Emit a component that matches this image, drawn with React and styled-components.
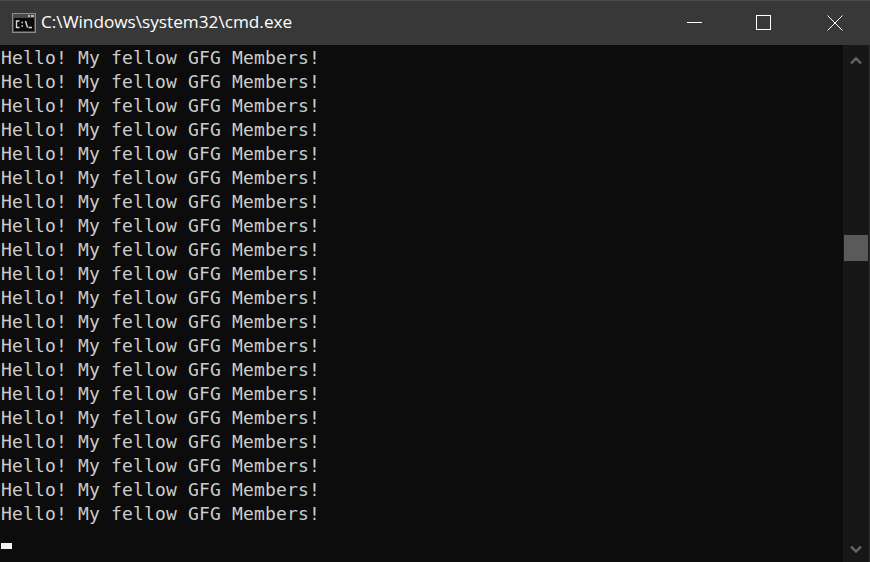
import React from 'react';
import styled, { createGlobalStyle } from 'styled-components';

const LINES = Array.from({ length: 20 }, (_, i) => i);

const App = () => {
  return (
    <Window>
      <GlobalStyle />
      <TitleBar>
        <CmdIcon width="24" height="20" viewBox="0 0 24 20">
          <rect x="0.5" y="0.5" width="23" height="19" fill="#4a4a4a" stroke="#8c8c8c" />
          <rect x="16" y="2" width="2" height="2" fill="#b5b5b5" />
          <rect x="19" y="2" width="3" height="2" fill="#b5b5b5" />
          <rect x="2" y="5" width="20" height="13" fill="#0a0a0a" />
          <path d="M7.5 8H4.5V14.5H7.5M9.5 9.5H11M9.5 13H11M13.5 8L15.5 14.5M16.5 14.5H20" fill="none" stroke="#d8d8d8" strokeWidth="1.4" />
        </CmdIcon>
        <Title>C:\Windows\system32\cmd.exe</Title>
        <WindowButton>
          <svg width="16" height="16" viewBox="0 0 16 16">
            <path d="M0 7.5H15" stroke="#fff" strokeWidth="1" />
          </svg>
        </WindowButton>
        <WindowButton>
          <svg width="18" height="16" viewBox="0 0 18 16">
            <rect x="0.5" y="0.5" width="14" height="14" fill="none" stroke="#fff" strokeWidth="1" />
          </svg>
        </WindowButton>
        <WindowButton>
          <svg width="16" height="16" viewBox="0 0 16 16">
            <path d="M0.5 0.5L15.5 15.5M15.5 0.5L0.5 15.5" stroke="#fff" strokeWidth="1" />
          </svg>
        </WindowButton>
      </TitleBar>

      <Body>
        <Console>
          {LINES.map((i) => (
            <Line key={i}>Hello! My fellow GFG Members!</Line>
          ))}
          <Line>
            <Cursor />
          </Line>
        </Console>

        <ScrollBar>
          <ArrowButton $height={30}>
            <svg width="12" height="9" viewBox="0 0 12 9">
              <path d="M1 7.5L6 2.5L11 7.5" fill="none" stroke="#666" strokeWidth="2.4" />
            </svg>
          </ArrowButton>
          <Track>
            <Thumb />
          </Track>
          <ArrowButton $height={25}>
            <svg width="12" height="9" viewBox="0 0 12 9">
              <path d="M1 1.5L6 6.5L11 1.5" fill="none" stroke="#666" strokeWidth="2.4" />
            </svg>
          </ArrowButton>
        </ScrollBar>
      </Body>
    </Window>
  );
};

export default App;

const GlobalStyle = createGlobalStyle`
  html, body {
    margin: 0;
    padding: 0;
    overflow: hidden;
    background: #0c0c0c;
  }
`;

const Window = styled.div`
  display: flex;
  flex-direction: column;
  width: 870px;
  height: 562px;
  overflow: hidden;
`;

// Title bar
const TitleBar = styled.div`
  display: flex;
  align-items: flex-start;
  flex: none;
  box-sizing: border-box;
  height: 45px;
  padding-left: 12px;
  background: #383838;
  border-top: 1px solid #4a4a4a;
`;

const CmdIcon = styled.svg`
  flex: none;
  margin: 12px 5px 0 0;
`;

const Title = styled.div`
  flex: 1;
  font-family: 'Open Sans', 'Liberation Sans', sans-serif;
  font-size: 17.2px;
  line-height: 42px;
  color: #ffffff;
  white-space: nowrap;
`;

const WindowButton = styled.div`
  display: flex;
  align-items: center;
  justify-content: center;
  width: 70px;
  height: 43px;
`;

// Console
const Body = styled.div`
  display: flex;
  flex: 1;
  min-height: 0;
`;

const Console = styled.div`
  flex: 1;
  padding-top: 1px;
  background: #0c0c0c;
`;

const Line = styled.div`
  height: 24px;
  padding-left: 1px;
  font-family: 'DejaVu Sans Mono', 'Liberation Mono', monospace;
  font-size: 18px;
  letter-spacing: 0.16px;
  line-height: 24px;
  color: #cccccc;
  white-space: pre;
`;

const Cursor = styled.span`
  display: block;
  width: 11px;
  height: 6px;
  margin-top: 17px;
  background: #f2f2f2;
`;

// Scrollbar
const ScrollBar = styled.div`
  display: flex;
  flex-direction: column;
  flex: none;
  box-sizing: border-box;
  width: 27px;
  background: #171717;
  border-right: 1px solid #2c2c2c;
`;

const ArrowButton = styled.div`
  display: flex;
  align-items: center;
  justify-content: center;
  flex: none;
  height: ${(props) => props.$height}px;
`;

const Track = styled.div`
  flex: 1;
  padding: 160px 1px 0 1px;
`;

const Thumb = styled.div`
  height: 26px;
  background: #5a5a5a;
`;
